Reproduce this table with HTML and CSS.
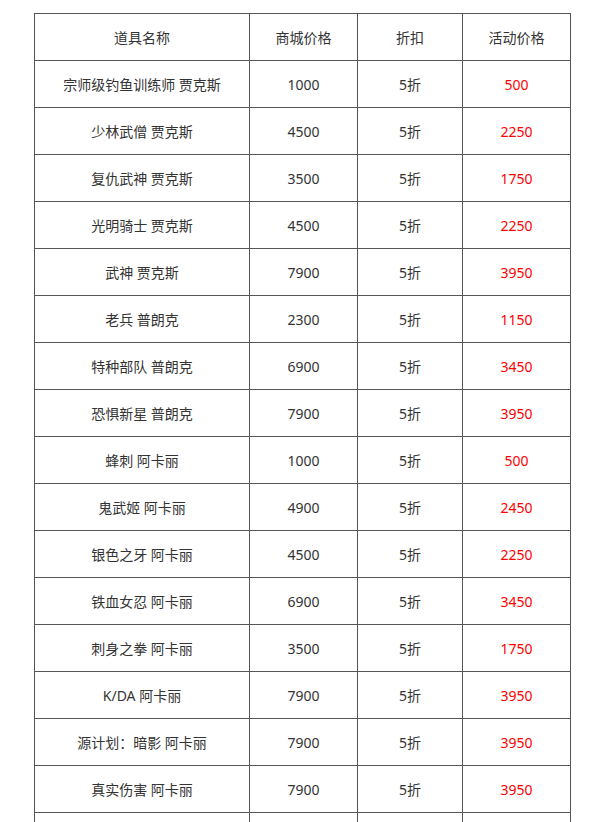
FILE: index.html
```html
<!DOCTYPE html>
<html lang="zh">
<head>
<meta charset="utf-8">
<link rel="stylesheet" href="styles.css">
</head>
<body>
<div class="page">
<table class="price-table">
  <colgroup>
    <col class="c-name"><col class="c-price"><col class="c-disc"><col class="c-sale">
  </colgroup>
  <tr><td>道具名称</td><td>商城价格</td><td>折扣</td><td>活动价格</td></tr>
  <tr><td>宗师级钓鱼训练师 贾克斯</td><td>1000</td><td>5折</td><td class="red">500</td></tr>
  <tr><td>少林武僧 贾克斯</td><td>4500</td><td>5折</td><td class="red">2250</td></tr>
  <tr><td>复仇武神 贾克斯</td><td>3500</td><td>5折</td><td class="red">1750</td></tr>
  <tr><td>光明骑士 贾克斯</td><td>4500</td><td>5折</td><td class="red">2250</td></tr>
  <tr><td>武神 贾克斯</td><td>7900</td><td>5折</td><td class="red">3950</td></tr>
  <tr><td>老兵 普朗克</td><td>2300</td><td>5折</td><td class="red">1150</td></tr>
  <tr><td>特种部队 普朗克</td><td>6900</td><td>5折</td><td class="red">3450</td></tr>
  <tr><td>恐惧新星 普朗克</td><td>7900</td><td>5折</td><td class="red">3950</td></tr>
  <tr><td>蜂刺 阿卡丽</td><td>1000</td><td>5折</td><td class="red">500</td></tr>
  <tr><td>鬼武姬 阿卡丽</td><td>4900</td><td>5折</td><td class="red">2450</td></tr>
  <tr><td>银色之牙 阿卡丽</td><td>4500</td><td>5折</td><td class="red">2250</td></tr>
  <tr><td>铁血女忍 阿卡丽</td><td>6900</td><td>5折</td><td class="red">3450</td></tr>
  <tr><td>刺身之拳 阿卡丽</td><td>3500</td><td>5折</td><td class="red">1750</td></tr>
  <tr><td>K/DA 阿卡丽</td><td>7900</td><td>5折</td><td class="red">3950</td></tr>
  <tr><td>源计划：暗影 阿卡丽</td><td>7900</td><td>5折</td><td class="red">3950</td></tr>
  <tr><td>真实伤害 阿卡丽</td><td>7900</td><td>5折</td><td class="red">3950</td></tr>
  <tr><td>&nbsp;</td><td>&nbsp;</td><td>&nbsp;</td><td class="red">&nbsp;</td></tr>
</table>
</div>
</body>
</html>
```

FILE: styles.css
```css
html, body {
  margin: 0;
  padding: 0;
  background: #fff;
}
.page {
  padding: 13px 0 0 34px;
  font-family: "Noto Sans", "Noto Sans CJK SC", sans-serif;
  font-size: 14px;
  color: #333;
}
.price-table {
  border-collapse: collapse;
  table-layout: fixed;
  width: 537px;
}
.c-name { width: 215px; }
.c-price { width: 108px; }
.c-disc { width: 105px; }
.c-sale { width: 108px; }
.price-table td {
  border: 1px solid #555;
  height: 47px;
  padding: 1px 0 0;
  text-align: center;
  vertical-align: middle;
  line-height: 20px;
  box-sizing: border-box;
}
.red { color: #ff0000; }
```
